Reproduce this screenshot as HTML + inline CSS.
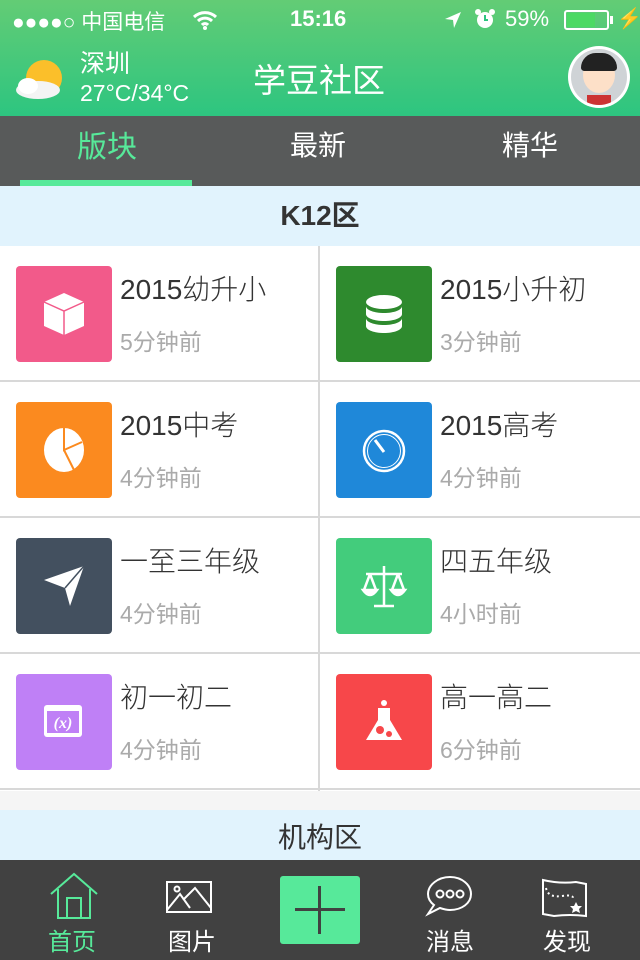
<!DOCTYPE html>
<html><head><meta charset="utf-8"><style>
*{margin:0;padding:0;box-sizing:border-box}
body{width:640px;height:960px;overflow:hidden;font-family:"Liberation Sans","Noto Sans CJK SC",sans-serif;background:#f5f5f5;position:relative}
.hdr{position:absolute;left:0;top:0;width:640px;height:116px;background:linear-gradient(#63cc75,#2dc580);color:#fff}
.abs{position:absolute}
.tabs{position:absolute;top:116px;left:0;width:640px;height:70px;background:#585a5a}
.tabs div{position:absolute;top:8px;font-size:28px;color:#fff;width:214px;text-align:center}
.sec{position:absolute;left:0;width:640px;background:#e1f3fd;text-align:center;font-size:28px;color:#333}
.grid{position:absolute;left:0;top:246px;width:640px;height:545px;background:#fff}
.cell{position:absolute;width:318px;height:134px}
.ic{position:absolute;left:16px;top:20px;width:96px;height:96px;border-radius:4px}
.t{position:absolute;left:120px;top:22px;font-size:28px;color:#333;white-space:nowrap;font-weight:300}
.s{position:absolute;left:120px;top:77px;font-size:23px;color:#aaa;white-space:nowrap}
.hl{position:absolute;left:0;width:640px;height:2px;background:#d8d8d8}
.bar{position:absolute;left:0;top:860px;width:640px;height:100px;background:#414141}
.bar .l{position:absolute;top:62px;font-size:24px;color:#fff;width:80px;text-align:center}
</style></head><body>
<div class="hdr">
 <div class="abs" style="left:12px;top:6px;font-size:21px;white-space:nowrap">●●●●○ 中国电信</div>
 <svg class="abs" style="left:192px;top:10px" width="26" height="20" viewBox="0 0 26 20"><path d="M2 7a16 16 0 0 1 22 0M6 11a10 10 0 0 1 14 0M10 15a4 4 0 0 1 6 0" stroke="#fff" stroke-width="3" fill="none"/><circle cx="13" cy="18" r="2" fill="#fff"/></svg>
 <div class="abs" style="left:290px;top:6px;font-size:22px;font-weight:bold">15:16</div>
 <svg class="abs" style="left:443px;top:10px" width="20" height="20"><path d="M2 9L18 2L11 18L10 10Z" fill="#fff"/></svg>
 <svg class="abs" style="left:474px;top:8px" width="22" height="22"><circle cx="11" cy="12" r="8" fill="#fff"/><path d="M11 7v5h3" stroke="#2dc580" stroke-width="2" fill="none"/><circle cx="4" cy="4" r="3" fill="#fff"/><circle cx="18" cy="4" r="3" fill="#fff"/></svg>
 <div class="abs" style="left:505px;top:6px;font-size:22px">59%</div>
 <div class="abs" style="left:564px;top:10px;width:45px;height:20px;border:2px solid #fff;border-radius:3px"><div style="margin:1px;width:28px;height:14px;background:#4cd964"></div></div>
 <div class="abs" style="left:610px;top:16px;width:3px;height:8px;background:#fff"></div>
 <div class="abs" style="left:617px;top:6px;font-size:20px">⚡</div>
 <svg class="abs" style="left:8px;top:56px" width="64" height="46"><circle cx="36" cy="22" r="18" fill="#fbbf2a"/><ellipse cx="30" cy="34" rx="22" ry="9" fill="#f4f4f4"/><ellipse cx="20" cy="30" rx="10" ry="8" fill="#fff"/></svg>
 <div class="abs" style="left:80px;top:44px;font-size:25px">深圳</div>
 <div class="abs" style="left:80px;top:80px;font-size:23px">27°C/34°C</div>
 <div class="abs" style="left:253px;top:54px;font-size:33px">学豆社区</div>
 <div class="abs" style="left:568px;top:46px;width:62px;height:62px;border-radius:50%;background:#fff;padding:3px"><div style="width:56px;height:56px;border-radius:50%;background:#cfd3d6;position:relative;overflow:hidden"><div style="position:absolute;left:12px;top:8px;width:32px;height:36px;border-radius:50%;background:#fde0c8"></div><div style="position:absolute;left:10px;top:4px;width:36px;height:18px;border-radius:18px 18px 4px 4px;background:#222"></div><div style="position:absolute;left:16px;top:46px;width:24px;height:12px;background:#c33"></div></div></div>
</div>
<div class="tabs">
 <div style="left:0;color:#57e99a;font-size:30px;top:6px">版块</div>
 <div style="left:211px">最新</div>
 <div style="left:423px">精华</div>
 <div class="abs" style="left:20px;top:64px;width:172px;height:6px;background:#57e99a"></div>
</div>
<div class="sec" style="top:186px;height:60px;line-height:60px;font-weight:bold">K12区</div>
<div class="grid">
 <div class="abs" style="left:318px;top:0;width:2px;height:545px;background:#d8d8d8"></div>
 <div class="hl" style="top:134px"></div><div class="hl" style="top:270px"></div><div class="hl" style="top:406px"></div><div class="hl" style="top:542px"></div>

 <div class="cell" style="left:0;top:0"><div class="ic" style="background:#f25a8a"><svg width="96" height="96"><path d="M48 27L68 36V60L48 69L28 60V36Z" fill="#fff"/><path d="M28 36L48 45L68 36M48 45V69" stroke="#f25a8a" stroke-width="1.5" fill="none"/></svg></div><div class="t">2015幼升小</div><div class="s">5分钟前</div></div>
 <div class="cell" style="left:320px;top:0"><div class="ic" style="background:#2e8a2e"><svg width="96" height="96"><ellipse cx="48" cy="36" rx="18" ry="7" fill="#fff"/><path d="M30 40v8c0 4 8 7 18 7s18-3 18-7v-8c0 4-8 7-18 7s-18-3-18-7zM30 52v8c0 4 8 7 18 7s18-3 18-7v-8c0 4-8 7-18 7s-18-3-18-7z" fill="#fff"/></svg></div><div class="t">2015小升初</div><div class="s">3分钟前</div></div>

 <div class="cell" style="left:0;top:136px"><div class="ic" style="background:#fb8a1f"><svg width="96" height="96"><ellipse cx="48" cy="48" rx="20" ry="22" fill="#fff"/><path d="M48 26V48L66 40M48 48L58 68" stroke="#fb8a1f" stroke-width="2" fill="none"/></svg></div><div class="t">2015中考</div><div class="s">4分钟前</div></div>
 <div class="cell" style="left:320px;top:136px"><div class="ic" style="background:#1f88d9"><svg width="96" height="96"><circle cx="48" cy="49" r="20" fill="none" stroke="#fff" stroke-width="2.5"/><circle cx="48" cy="49" r="16.5" fill="none" stroke="#fff" stroke-width="1"/><path d="M39 38L48 50" stroke="#fff" stroke-width="3"/></svg></div><div class="t">2015高考</div><div class="s">4分钟前</div></div>

 <div class="cell" style="left:0;top:272px"><div class="ic" style="background:#43505f"><svg width="96" height="96"><path d="M28 42L68 28L54 68L49 50Z" fill="#fff"/><path d="M49 50L68 28" stroke="#43505f" stroke-width="1.5"/></svg></div><div class="t">一至三年级</div><div class="s">4分钟前</div></div>
 <div class="cell" style="left:320px;top:272px"><div class="ic" style="background:#43cc7c"><svg width="96" height="96" fill="none" stroke="#fff" stroke-width="2.5"><path d="M48 28V68M38 68H58M30 36H66M34 36L28 52M34 36L40 52M62 36L56 52M62 36L68 52"/><path d="M27 52Q34 62 41 52ZM55 52Q62 62 69 52Z" fill="#fff"/></svg></div><div class="t">四五年级</div><div class="s">4小时前</div></div>

 <div class="cell" style="left:0;top:408px"><div class="ic" style="background:#bf80f6"><svg width="96" height="96"><rect x="28" y="31" width="38" height="32" rx="3" fill="#fff"/><rect x="31" y="37" width="32" height="22" fill="#bf80f6"/><text x="47" y="54" font-size="16" font-weight="bold" font-style="italic" fill="#fff" text-anchor="middle" font-family="Liberation Serif">(x)</text></svg></div><div class="t">初一初二</div><div class="s">4分钟前</div></div>
 <div class="cell" style="left:320px;top:408px"><div class="ic" style="background:#f7474a"><svg width="96" height="96"><circle cx="48" cy="29" r="3" fill="#fff"/><path d="M42 34H54V46L66 66H30L42 46Z" fill="#fff"/><circle cx="44" cy="56" r="4" fill="#f7474a"/><circle cx="53" cy="60" r="3" fill="#f7474a"/></svg></div><div class="t">高一高二</div><div class="s">6分钟前</div></div>
</div>
<div class="sec" style="top:810px;height:50px;line-height:56px">机构区</div>
<div class="bar">
 <svg class="abs" style="left:48px;top:12px" width="52" height="48" fill="none" stroke="#57e99a" stroke-width="2"><path d="M3 22L26 2L49 22M10 17V46H42V17M19 46V26H33V46"/></svg>
 <div class="l" style="left:32px;color:#57e99a">首页</div>
 <svg class="abs" style="left:165px;top:20px" width="48" height="34" fill="none" stroke="#fff" stroke-width="2"><rect x="2" y="2" width="44" height="30"/><circle cx="12" cy="9" r="2.5"/><path d="M2 30L15 14L25 28M18 20L30 8L46 28"/></svg>
 <div class="l" style="left:152px">图片</div>
 <div class="abs" style="left:280px;top:16px;width:80px;height:68px;background:#57e99a;border-radius:3px"><div class="abs" style="left:38px;top:10px;width:3px;height:48px;background:#414141"></div><div class="abs" style="left:15px;top:32px;width:50px;height:3px;background:#414141"></div></div>
 <svg class="abs" style="left:424px;top:14px" width="52" height="44" fill="none" stroke="#fff" stroke-width="2"><path d="M26 3C38 3 47 11 47 20S38 36 26 36C22 36 19 35 16 34L4 40L10 31C6 28 4 24 4 20C4 11 14 3 26 3Z"/><circle cx="16" cy="20" r="3.5"/><circle cx="26" cy="20" r="3.5"/><circle cx="36" cy="20" r="3.5"/></svg>
 <div class="l" style="left:410px">消息</div>
 <svg class="abs" style="left:540px;top:18px" width="50" height="42" fill="none" stroke="#fff" stroke-width="2"><path d="M3 2Q20 6 36 4L46 6V38Q30 36 14 38L3 36Z"/><path d="M6 10Q8 20 22 18T32 22" stroke-dasharray="2 3"/><path d="M36 24l2 4 4 0-3 3 1 4-4-2-4 2 1-4-3-3 4 0z" fill="#fff" stroke="none"/></svg>
 <div class="l" style="left:527px">发现</div>
</div>
</body></html>
